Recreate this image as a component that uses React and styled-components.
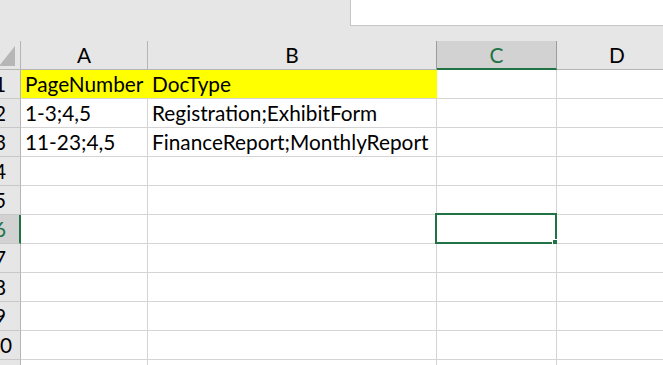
import React from "react";
import styled, { createGlobalStyle } from "styled-components";

const GREEN = "#217346";
const GRID = "#d4d4d4";
const HEAD_BG = "#e6e6e6";
const HEAD_SEL = "#d2d2d2";
const HEAD_LINE = "#b5b5b5";

const GlobalStyle = createGlobalStyle`
  html, body { margin: 0; padding: 0; background: ${HEAD_BG}; }
  body { font-family: "Lato", "Liberation Sans", sans-serif; }
`;

const Window = styled.div`
  width: 663px;
  height: 365px;
  overflow: hidden;
  background: ${HEAD_BG};
  display: flex;
  flex-direction: column;
`;

const TopBar = styled.div`
  height: 41px;
  flex: none;
  display: flex;
  padding-left: 350px;
  box-sizing: border-box;
  align-items: flex-start;
`;

const FormulaBox = styled.div`
  flex: 1;
  height: 26px;
  box-sizing: border-box;
  background: #ffffff;
  border-left: 1px solid #c6c6c6;
  border-bottom: 1px solid #c6c6c6;
`;

const Sheet = styled.div`
  margin-left: -20px;
  display: grid;
  grid-template-columns: 41px 127px 289px 120px 121px;
  grid-auto-rows: 29px;
  font-size: 20.8px;
  color: #000;
`;

const Corner = styled.div`
  box-sizing: border-box;
  background: ${HEAD_BG};
  border-right: 1px solid ${HEAD_LINE};
  border-bottom: 1px solid ${HEAD_LINE};
  display: flex;
  justify-content: flex-end;
  align-items: flex-end;
  padding: 0 5px 3px 0;
`;

const ColHeader = styled.div`
  box-sizing: border-box;
  background: ${(p) => (p.$selected ? HEAD_SEL : HEAD_BG)};
  color: ${(p) => (p.$selected ? GREEN : "#000")};
  border-right: 1px solid ${(p) => (p.$edge || p.$selected ? "#9c9c9c" : HEAD_LINE)};
  border-bottom: ${(p) => (p.$selected ? `2px solid ${GREEN}` : `1px solid ${HEAD_LINE}`)};
  display: flex;
  justify-content: center;
  align-items: flex-end;
  padding-bottom: ${(p) => (p.$selected ? "1px" : "2px")};
  line-height: 24px;
`;

const RowHeader = styled.div`
  box-sizing: border-box;
  background: ${(p) => (p.$selected ? HEAD_SEL : HEAD_BG)};
  color: ${(p) => (p.$selected ? GREEN : "#000")};
  border-right: ${(p) => (p.$selected ? `2px solid ${GREEN}` : `1px solid ${HEAD_LINE}`)};
  border-bottom: 1px solid #c8c8c8;
  display: flex;
  justify-content: center;
  align-items: flex-end;
  padding-bottom: 2px;
  padding-left: ${(p) => (p.$selected ? "1px" : "0")};
  line-height: 24px;
`;

const Cell = styled.div`
  position: relative;
  box-sizing: border-box;
  background: ${(p) => (p.$fill ? p.$fill : "#ffffff")};
  border-right: 1px solid ${(p) => (p.$fill ? p.$fill : GRID)};
  border-bottom: 1px solid ${GRID};
  display: flex;
  align-items: flex-end;
  padding: 0 0 2px 4px;
  white-space: nowrap;
  line-height: 24px;
`;

const Selection = styled.div`
  position: absolute;
  left: -2px;
  top: -2px;
  right: -1px;
  bottom: -1px;
  border: 2px solid ${GREEN};
  pointer-events: none;
`;

const FillHandle = styled.div`
  position: absolute;
  right: -4px;
  bottom: -4px;
  width: 6px;
  height: 6px;
  background: ${GREEN};
  border: 1px solid #ffffff;
  border-right: none;
  border-bottom: none;
`;

const columns = ["A", "B", "C", "D"];

const data = [
  ["PageNumber", "DocType"],
  ["1-3;4,5", "Registration;ExhibitForm"],
  ["11-23;4,5", "FinanceReport;MonthlyReport"],
];

const SELECTED_COL = 2;
const SELECTED_ROW = 5;

export default function App() {
  const rows = Array.from({ length: 11 }, (_, i) => i);
  return (
    <>
      <GlobalStyle />
      <Window>
        <TopBar>
          <FormulaBox />
        </TopBar>
        <Sheet>
          <Corner>
            <svg width="16" height="20" viewBox="0 0 16 20">
              <polygon points="16,0 16,20 0,20" fill="#b6b6b6" />
            </svg>
          </Corner>
          {columns.map((c, ci) => (
            <ColHeader
              key={c}
              $selected={ci === SELECTED_COL}
              $edge={ci === SELECTED_COL - 1}
            >
              {c}
            </ColHeader>
          ))}
          {rows.map((r) => (
            <React.Fragment key={r}>
              <RowHeader $selected={r === SELECTED_ROW}>{r + 1}</RowHeader>
              {columns.map((c, ci) => {
                const text = data[r] ? data[r][ci] : undefined;
                const fill = r === 0 && ci < 2 ? "#ffff00" : undefined;
                const sel = r === SELECTED_ROW && ci === SELECTED_COL;
                return (
                  <Cell key={c} $fill={fill}>
                    {text}
                    {sel && (
                      <Selection>
                        <FillHandle />
                      </Selection>
                    )}
                  </Cell>
                );
              })}
            </React.Fragment>
          ))}
        </Sheet>
      </Window>
    </>
  );
}
